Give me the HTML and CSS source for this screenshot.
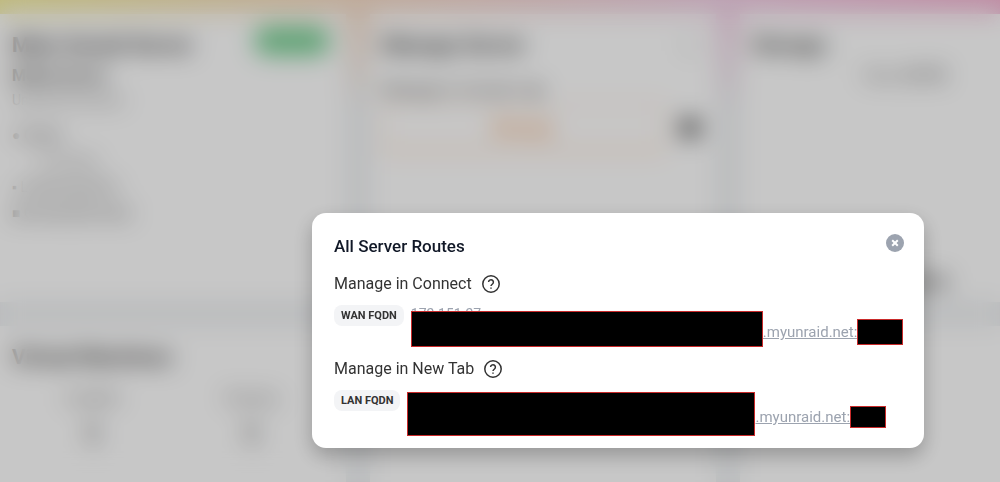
FILE: index.html
```
<!DOCTYPE html>
<html lang="en">

<head>
    <meta charset="UTF-8">
    <meta name="viewport" content="width=device-width, initial-scale=1.0">
    <title>All Server Routes</title>
    <link rel="stylesheet" href="styles.css">
</head>

<body>
    <main class="dashboard" aria-hidden="true">
        <section class="card">
            <div class="card-header">
                <h2>Main Unraid Server</h2>
                <span class="status"></span>
            </div>
            <h3>Media Server</h3>
            <p class="version">Unraid OS Version</p>
            <ul class="details">
                <li>● Online</li>
                <li class="indent">5 minutes</li>
                <li>▪ License key Pro</li>
                <li>■ Connected Cloud</li>
            </ul>
        </section>
        <section class="card">
            <div class="card-header">
                <h2>Manage Server</h2>
                <span class="ring"></span>
            </div>
            <p class="label">Manage in Connect &nbsp;◉</p>
            <div class="manage-row">
                <span class="outline-box">Manage</span>
                <span class="dot"></span>
            </div>
        </section>
        <section class="card">
            <div class="card-header">
                <h2>Storage</h2>
            </div>
            <p class="usage"><span>Free</span> &nbsp;<b>30 TB</b></p>
            <p class="more">Storage details</p>
        </section>
        <section class="card">
            <div class="card-header">
                <h2>Virtual Machines</h2>
            </div>
            <div class="counts">
                <div>Installed<b>1</b></div>
                <div>Running<b>1</b></div>
            </div>
        </section>
        <section class="card"></section>
        <section class="card"></section>
    </main>

    <div class="overlay">
        <div class="modal" role="dialog" aria-labelledby="modalTitle">
            <div class="modal-header">
                <h1 id="modalTitle">All Server Routes</h1>
                <button class="close" type="button" aria-label="Close">
                    <svg viewBox="0 0 18 18" width="18" height="18">
                        <circle cx="9" cy="9" r="9" fill="#9ca3af" />
                        <path d="M6.2 6.2l5.6 5.6M11.8 6.2l-5.6 5.6" stroke="#fff" stroke-width="2" />
                    </svg>
                </button>
            </div>

            <h2 class="route-title">Manage in Connect
                <svg viewBox="0 0 18 18" width="18" height="18">
                    <circle cx="9" cy="9" r="8.2" />
                    <path d="M6.6 7.1a2.4 2.4 0 1 1 3.9 1.9c-.9.7-1.5 1-1.5 2.1" />
                    <path d="M9 12.4v1.4" />
                </svg>
            </h2>
            <div class="route">
                <span class="badge">WAN FQDN</span>
                <a class="link wan" href="#">
                    <span class="address">172.151.27</span>
                    <span class="redacted host"></span>
                    <span class="domain">.myunraid.net:</span>
                    <span class="redacted port"></span>
                </a>
            </div>

            <h2 class="route-title">Manage in New Tab
                <svg viewBox="0 0 18 18" width="18" height="18">
                    <circle cx="9" cy="9" r="8.2" />
                    <path d="M6.6 7.1a2.4 2.4 0 1 1 3.9 1.9c-.9.7-1.5 1-1.5 2.1" />
                    <path d="M9 12.4v1.4" />
                </svg>
            </h2>
            <div class="route">
                <span class="badge">LAN FQDN</span>
                <a class="link lan" href="#">
                    <span class="redacted host"></span>
                    <span class="domain">.myunraid.net:</span>
                    <span class="redacted port"></span>
                </a>
            </div>
        </div>
    </div>
</body>

</html>
```
FILE: styles.css
```
* {
    box-sizing: border-box;
}

body {
    margin: 0;
    height: 100vh;
    overflow: hidden;
    font-family: Roboto, "Liberation Sans", sans-serif;
    font-size: 16px;
    line-height: 24px;
    color: #333;
}

h1,
h2,
h3,
p,
ul {
    margin: 0;
    padding: 0;
}

/* Page behind the modal */
.dashboard {
    display: grid;
    grid-template-columns: 4fr 4fr 3fr;
    grid-template-rows: 288px 1fr;
    gap: 24px;
    height: 100vh;
    padding-top: 14px;
    background: linear-gradient(rgba(242, 244, 247, 0), #eff1f3 110px), linear-gradient(90deg, #f6efa2, #f6dcc4 33%, #f3d0e6 72%, #f6b6d4);
}

.card {
    padding: 16px 16px 16px 12px;
    background-color: #fff;
    overflow: hidden;
}

.card-header {
    display: flex;
    justify-content: space-between;
    align-items: center;
    height: 30px;
}

.card h2 {
    font-size: 21px;
    font-weight: 700;
    color: #333;
}

.card h3 {
    margin-top: 4px;
    font-size: 16px;
}

.status {
    width: 76px;
    height: 28px;
    margin-top: -8px;
    border-radius: 14px;
    background-color: #78d093;
}

.version {
    font-size: 14px;
    color: #777;
}

.details {
    margin-top: 10px;
    list-style-type: none;
    line-height: 26px;
    font-size: 14px;
    color: #444;
}

.details .indent {
    padding-left: 24px;
    color: #777;
}

.ring {
    width: 18px;
    height: 18px;
    border: 1px solid #999;
    border-radius: 50%;
}

.label {
    margin-top: 18px;
    color: #444;
}

.manage-row {
    display: flex;
    align-items: center;
    gap: 16px;
    padding-top: 2px;
}

.outline-box {
    flex: 1;
    height: 48px;
    border: 2px solid #fcd9bd;
    border-bottom-width: 4px;
    line-height: 42px;
    font-size: 17px;
    font-weight: 700;
    text-align: center;
    color: #f59a56;
}

.dot {
    width: 20px;
    height: 20px;
    border-radius: 50%;
    background-color: #444;
}

.usage {
    margin-top: 4px;
    padding-left: 72px;
    text-align: center;
    color: #666;
}

.more {
    margin-top: 182px;
    padding-left: 88px;
    font-weight: 700;
}

.counts {
    display: flex;
    justify-content: space-around;
    margin-top: 14px;
    text-align: center;
    font-size: 14px;
    color: #666;
}

.counts b {
    display: block;
    font-size: 32px;
    line-height: 48px;
}

/* Modal */
.overlay {
    position: fixed;
    inset: 0;
    display: flex;
    justify-content: flex-end;
    align-items: flex-end;
    padding: 0 76px 34px 24px;
    background-color: rgba(0, 0, 0, 0.22);
    backdrop-filter: blur(12px);
}

.modal {
    width: 100%;
    max-width: 612px;
    padding: 21px 20px 12px 22px;
    border-radius: 14px;
    background-color: #fff;
    box-shadow: 0 8px 20px rgba(0, 0, 0, 0.25);
}

.modal-header {
    display: flex;
    justify-content: space-between;
    align-items: flex-start;
    margin-bottom: 14px;
}

.modal h1 {
    font-size: 17px;
    font-weight: 500;
    color: #111827;
}

.close {
    width: 18px;
    height: 18px;
    padding: 0;
    border: none;
    background: none;
    cursor: pointer;
}

.close svg {
    display: block;
}

.route-title {
    display: flex;
    align-items: center;
    gap: 10px;
    font-size: 16px;
    font-weight: 400;
}

.route-title svg {
    fill: none;
    stroke: #333;
    stroke-width: 1.5;
}

.route {
    display: flex;
    align-items: flex-start;
    gap: 7px;
    padding-top: 9px;
}

.route + .route-title {
    margin-top: 10px;
}

.badge {
    padding: 0 7px;
    border-radius: 8px;
    background-color: #f3f4f6;
    font-size: 11px;
    font-weight: 700;
    line-height: 21px;
    white-space: nowrap;
}

.link {
    position: relative;
    display: flex;
    align-items: center;
    color: #9ca3af;
    text-decoration: none;
}

.wan {
    padding-top: 6px;
}

.lan {
    padding-top: 2px;
}

/* first line of the address, mostly under the redaction */
.address {
    position: absolute;
    top: 0;
    left: 0;
    font-size: 14px;
    line-height: 18px;
}

.domain {
    margin-top: 6px;
    font-size: 15px;
    text-decoration: underline;
}

.redacted {
    position: relative;
    border: 1px solid #c92a2a;
    background-color: #000;
}

.wan .host {
    width: 352px;
    height: 36px;
}

.lan .host {
    width: 348px;
    height: 44px;
}

.port {
    margin-top: 6px;
}

.wan .port {
    width: 46px;
    height: 26px;
}

.lan .port {
    width: 36px;
    height: 22px;
}
```
